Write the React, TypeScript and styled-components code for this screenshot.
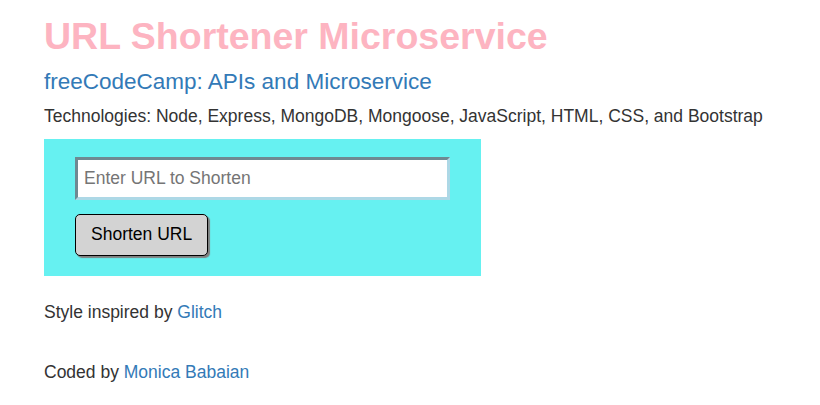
import React from "react";
import styled, { createGlobalStyle } from "styled-components";

const GlobalStyle = createGlobalStyle`
  html, body {
    margin: 0;
    padding: 0;
    background: #ffffff;
  }
  body {
    font-family: "Liberation Sans", Arial, Helvetica, sans-serif;
    font-size: 17.5px;
    line-height: 25px;
    color: #333333;
  }
`;

const Page = styled.div`
  padding: 15.5px 0 0 44px;
`;

const Title = styled.h1`
  margin: 0;
  font-size: 37.5px;
  line-height: 41px;
  font-weight: bold;
  color: #fdb4c1;
`;

const Subtitle = styled.h3`
  margin: 13.5px 0 0;
  font-size: 22.5px;
  line-height: 24.75px;
  font-weight: normal;
  color: #337ab7;
`;

const Text = styled.p<{ $gap: number }>`
  margin: ${(p) => p.$gap}px 0 0;
`;

const FormBox = styled.form`
  box-sizing: border-box;
  width: 437px;
  margin-top: 10px;
  padding: 18px 31px 20px;
  background-color: #66f1f1;
  display: flex;
  flex-direction: column;
  align-items: flex-start;
  gap: 14px;
`;

const UrlInput = styled.input`
  box-sizing: border-box;
  width: 375px;
  height: 43px;
  padding: 0 6px;
  border: 3px inset lightblue;
  background: #ffffff;
  font-family: "Liberation Sans", Arial, sans-serif;
  font-size: 17.5px;
  color: #333333;
  outline: none;
  &::placeholder {
    color: #757575;
  }
`;

const SubmitButton = styled.button`
  box-sizing: border-box;
  height: 42px;
  padding: 0 15px;
  border: 1px solid #000000;
  border-radius: 5px;
  background-color: lightgray;
  box-shadow: 2px 2px 1px gray;
  font-family: "Liberation Sans", Arial, sans-serif;
  font-size: 17.5px;
  color: #000000;
  cursor: pointer;
`;

const Link = styled.a`
  color: #337ab7;
  text-decoration: none;
`;

export default function App() {
  return (
    <>
      <GlobalStyle />
      <Page>
        <Title>URL Shortener Microservice</Title>
        <Subtitle>freeCodeCamp: APIs and Microservice</Subtitle>
        <Text $gap={9}>
          Technologies: Node, Express, MongoDB, Mongoose, JavaScript, HTML,
          CSS, and Bootstrap
        </Text>
        <FormBox onSubmit={(e) => e.preventDefault()}>
          <UrlInput type="text" placeholder="Enter URL to Shorten" />
          <SubmitButton type="submit">Shorten URL</SubmitButton>
        </FormBox>
        <Text $gap={24.7}>
          Style inspired by <Link href="#">Glitch</Link>
        </Text>
        <Text $gap={35}>
          Coded by <Link href="#">Monica Babaian</Link>
        </Text>
      </Page>
    </>
  );
}
